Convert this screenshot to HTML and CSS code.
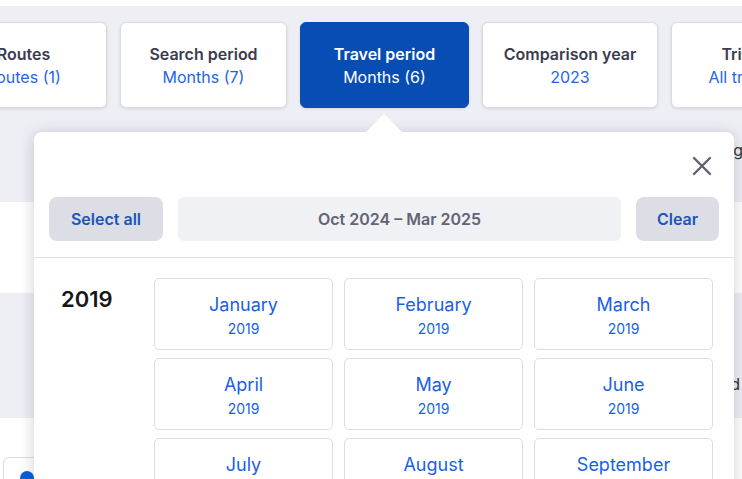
FILE: index.html
```html
<!DOCTYPE html>
<html>
<head>
<meta charset="utf-8">
<link rel="stylesheet" href="styles.css">
</head>
<body>
<div class="page">
  <div class="topbar"></div>
  <section class="filters">
    <div class="tabs">
      <div class="tab w167"><span class="tab-title">Routes</span><span class="tab-value">Routes (1)</span></div>
      <div class="tab w167"><span class="tab-title">Search period</span><span class="tab-value">Months (7)</span></div>
      <div class="tab w169 active"><span class="tab-title">Travel period</span><span class="tab-value">Months (6)</span></div>
      <div class="tab w176"><span class="tab-title">Comparison year</span><span class="tab-value">2023</span></div>
      <div class="tab w170"><span class="tab-title">Trip type</span><span class="tab-value">All trip types</span></div>
    </div>
    <div class="info-line"><span>Showing</span></div>
  </section>
  <section class="band white"></section>
  <section class="band gray tall"><span class="band-text">Trend</span></section>
  <section class="band white rest">
    <div class="legend"><span class="dot"></span></div>
  </section>

  <div class="popup">
    <div class="arrow"></div>
    <div class="popup-head">
      <button class="close" aria-label="Close">
        <svg width="24" height="24" viewBox="0 0 24 24"><path d="M4 4 L20 20 M20 4 L4 20" stroke="#5f6073" stroke-width="2.4" stroke-linecap="round" fill="none"/></svg>
      </button>
    </div>
    <div class="actions">
      <button class="btn select-all">Select all</button>
      <div class="range">Oct 2024 – Mar 2025</div>
      <button class="btn clear">Clear</button>
    </div>
    <div class="divider"></div>
    <div class="year-block">
      <div class="year">2019</div>
      <div class="months">
        <div class="month"><span class="m-name">January</span><span class="m-year">2019</span></div>
        <div class="month"><span class="m-name">February</span><span class="m-year">2019</span></div>
        <div class="month"><span class="m-name">March</span><span class="m-year">2019</span></div>
        <div class="month"><span class="m-name">April</span><span class="m-year">2019</span></div>
        <div class="month"><span class="m-name">May</span><span class="m-year">2019</span></div>
        <div class="month"><span class="m-name">June</span><span class="m-year">2019</span></div>
        <div class="month"><span class="m-name">July</span><span class="m-year">2019</span></div>
        <div class="month"><span class="m-name">August</span><span class="m-year">2019</span></div>
        <div class="month"><span class="m-name">September</span><span class="m-year">2019</span></div>
      </div>
    </div>
  </div>
</div>
</body>
</html>
```
FILE: styles.css
```css
* { box-sizing: border-box; }
html, body { margin: 0; padding: 0; }
body {
  width: 742px;
  height: 479px;
  overflow: hidden;
  background: #ffffff;
  font-family: Inter, "Noto Sans", sans-serif;
}
.page { position: relative; width: 742px; height: 479px; overflow: hidden; }
.topbar { height: 6px; background: #ffffff; }
.filters {
  background: #eeeff4;
  height: 196px;
  padding-top: 16px;
}
.tabs {
  display: flex;
  gap: 13px;
  margin-left: -60px;
  width: 950px;
}
.tab {
  flex: 0 0 auto;
  height: 86px;
  background: #ffffff;
  border: 1px solid #d9dae2;
  border-radius: 6px;
  box-shadow: 0 1px 3px rgba(30, 30, 60, 0.12);
  display: flex;
  flex-direction: column;
  align-items: center;
  justify-content: center;
  line-height: 22px;
  font-size: 16px;
  white-space: nowrap;
}
.w167 { width: 167px; }
.w169 { width: 169px; }
.w170 { width: 170px; }
.w176 { width: 176px; }
.tab-title { font-weight: 600; color: #3b3c4d; }
.tab-value { color: #1f66e5; padding-top: 1px; }
.tab.active { background: #074db3; border-color: #074db3; }
.tab.active .tab-title,
.tab.active .tab-value { color: #ffffff; }
.info-line {
  display: flex;
  justify-content: flex-end;
  margin-top: 32px;
  font-size: 16px;
  color: #333;
  margin-right: -1px;
}
.band { display: flex; }
.band.white { height: 91px; background: #ffffff; }
.band.gray { background: #eeeff4; }
.band.tall { height: 125px; justify-content: flex-end; align-items: flex-end; padding-bottom: 24px; }
.band-text { font-size: 16px; color: #333; margin-right: 2px; }
.band.rest { height: 70px; padding: 39px 0 0 3px; }
.legend {
  width: 120px;
  height: 40px;
  border: 1px solid #d9dae2;
  border-radius: 6px;
  padding: 13px 0 0 16px;
}
.dot { display: block; width: 14px; height: 14px; border-radius: 50%; background: #0b5fd8; }

.popup {
  position: absolute;
  left: 34px;
  top: 132px;
  width: 700px;
  height: 420px;
  background: #ffffff;
  border-radius: 8px;
  box-shadow: 0 2px 16px rgba(20, 20, 50, 0.2);
}
.arrow {
  position: absolute;
  left: 332px;
  top: -18px;
  width: 0;
  height: 0;
  border-left: 18px solid transparent;
  border-right: 18px solid transparent;
  border-bottom: 18px solid #ffffff;
}
.popup-head {
  height: 65px;
  display: flex;
  justify-content: flex-end;
  align-items: flex-start;
  padding: 22px 20px 0 0;
}
.close {
  width: 24px;
  height: 24px;
  padding: 0;
  border: 0;
  background: none;
  display: block;
}
.close svg { display: block; }
.actions {
  display: flex;
  gap: 15px;
  padding: 0 15px 16px;
}
.btn {
  height: 44px;
  border: 0;
  border-radius: 8px;
  background: #dddde5;
  color: #1a55b8;
  font-family: Inter, "Noto Sans", sans-serif;
  font-weight: 600;
  font-size: 16px;
  padding: 0;
}
.select-all { width: 114px; }
.clear { width: 83px; }
.range {
  flex: 1;
  height: 44px;
  border-radius: 6px;
  background: #f0f1f5;
  color: #626375;
  font-weight: 600;
  font-size: 16px;
  display: flex;
  align-items: center;
  justify-content: center;
}
.divider { height: 1px; background: #dfe0e7; }
.year-block {
  display: flex;
  padding: 20px 0 0 27px;
}
.year {
  width: 93px;
  font-size: 22px;
  font-weight: 600;
  color: #161616;
  line-height: 30px;
  padding-top: 6px;
}
.months {
  display: grid;
  grid-template-columns: repeat(3, 179px);
  grid-auto-rows: 72px;
  column-gap: 11px;
  row-gap: 8px;
}
.month {
  border: 1px solid #dcdde5;
  border-radius: 5px;
  display: flex;
  flex-direction: column;
  align-items: center;
  justify-content: center;
  gap: 3px;
  padding-top: 2px;
  color: #1b5fe3;
}
.m-name { font-size: 18px; line-height: 24px; }
.m-year { font-size: 14px; line-height: 18px; }
```
